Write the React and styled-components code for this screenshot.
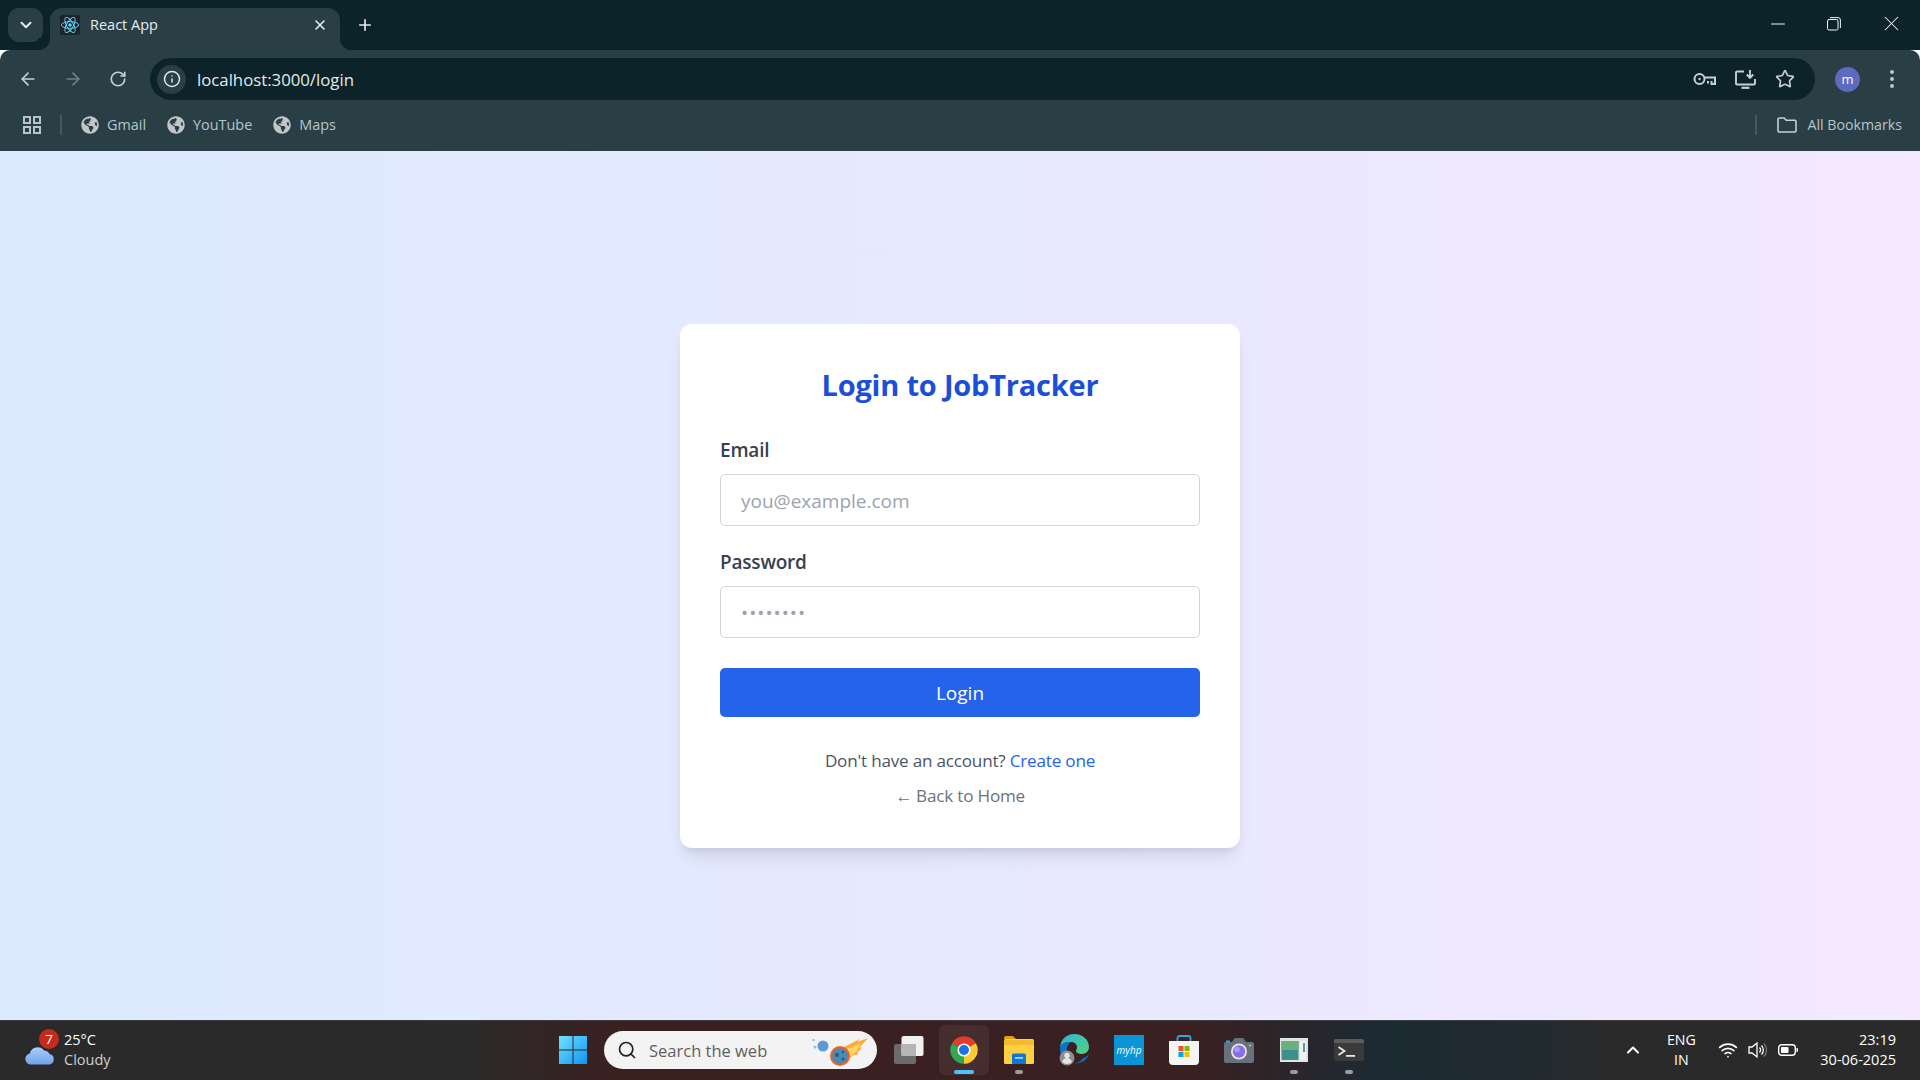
import React from "react";
import styled, { createGlobalStyle } from "styled-components";
import { ArrowLeft, ArrowRight, RotateCw, Info, X, Plus, ChevronDown, ChevronUp, Star, Search, Wifi, Minus } from "lucide-react";
import { FaGlobeAmericas } from "react-icons/fa";

const GlobalStyle = createGlobalStyle`
  html, body { margin: 0; padding: 0; height: 100%; overflow: hidden; }
  * { box-sizing: border-box; }
  body { font-family: "Open Sans", "Noto Sans", "Liberation Sans", sans-serif; }
`;

const chrome = "#2a3e46";
const frame = "#0b2329";

const Screen = styled.div`
  display: flex;
  flex-direction: column;
  width: 1920px;
  height: 1080px;
`;

/* browser chrome */
const TabStrip = styled.div`
  display: flex;
  align-items: flex-end;
  height: 50px;
  flex-shrink: 0;
  padding-left: 8px;
  background: ${frame};
`;

const TabMenu = styled.div`
  display: flex;
  align-items: center;
  justify-content: center;
  width: 35px;
  height: 34px;
  margin-bottom: 8px;
  border-radius: 11px;
  background: ${chrome};
  color: #e8eef0;
`;

const Tab = styled.div`
  position: relative;
  display: flex;
  align-items: center;
  width: 290px;
  height: 42px;
  margin-left: 7px;
  padding: 0 12px 9px 10px;
  border-radius: 12px 12px 0 0;
  background: ${chrome};
  &::before,
  &::after {
    content: "";
    position: absolute;
    bottom: 0;
    width: 12px;
    height: 12px;
  }
  &::before {
    left: -12px;
    background: radial-gradient(circle at 0 0, ${frame} 12px, ${chrome} 12.5px);
  }
  &::after {
    right: -12px;
    background: radial-gradient(circle at 100% 0, ${frame} 12px, ${chrome} 12.5px);
  }
`;

const TabTitle = styled.span`
  flex: 1;
  margin-left: 10px;
  font-size: 14.5px;
  color: #e6ecee;
`;

const NewTab = styled.div`
  display: flex;
  margin: 0 0 16px 16px;
  color: #e6ecee;
`;

const WindowControls = styled.div`
  display: flex;
  align-items: center;
  gap: 38px;
  margin: 0 16px 14px auto;
  color: #f2f5f6;
`;

const Toolbar = styled.div`
  display: flex;
  align-items: center;
  height: 58px;
  flex-shrink: 0;
  padding: 0 16px 0 16px;
  border-radius: 10px 10px 0 0;
  background: ${chrome};
`;

const NavButton = styled.div`
  display: flex;
  width: 24px;
  justify-content: center;
  margin-right: 21px;
  color: ${(p) => (p.$disabled ? "#6d8087" : "#c5d0d4")};
`;

const AddressBar = styled.div`
  display: flex;
  align-items: center;
  width: 1665px;
  height: 42px;
  margin-left: -1px;
  padding: 0 20px 0 7px;
  border-radius: 21px;
  background: ${frame};
`;

const SiteInfo = styled.div`
  display: flex;
  align-items: center;
  justify-content: center;
  width: 29px;
  height: 29px;
  border-radius: 50%;
  background: ${chrome};
  color: #dfe6e8;
`;

const Url = styled.span`
  flex: 1;
  margin-left: 11px;
  font-size: 16.75px;
  color: #e4eaec;
`;

const BarIcons = styled.div`
  display: flex;
  align-items: center;
  gap: 19px;
  color: #c7cfd2;
`;

const Avatar = styled.div`
  display: flex;
  align-items: center;
  justify-content: center;
  width: 25px;
  height: 25px;
  margin-left: 20px;
  border-radius: 50%;
  background: #5c6bc0;
  font-size: 13px;
  line-height: 1;
  color: #fff;
`;

const KebabMenu = styled.div`
  display: flex;
  flex-direction: column;
  gap: 3px;
  margin-left: 30px;
  & > i {
    width: 4px;
    height: 4px;
    border-radius: 50%;
    background: #b9c6ca;
  }
`;

const BookmarkBar = styled.div`
  display: flex;
  align-items: center;
  height: 43px;
  flex-shrink: 0;
  padding: 0 18px 10px 23px;
  background: ${chrome};
  font-size: 14.4px;
  color: #b6c6cc;
`;

const Divider = styled.div`
  width: 2px;
  height: 20px;
  margin: ${(p) => p.$margin};
  background: #46585f;
`;

const Bookmark = styled.div`
  display: flex;
  align-items: center;
  gap: 8px;
  margin-right: 21px;
  color: #b6c6cc;
  & > svg { color: #c2c6c8; }
`;

const BookmarkEnd = styled.div`
  display: flex;
  align-items: center;
  margin-left: auto;
`;

const AllBookmarks = styled.div`
  display: flex;
  align-items: center;
  gap: 10px;
  font-size: 14.2px;
`;

/* login page */
const Page = styled.main`
  flex: 1;
  display: flex;
  align-items: center;
  justify-content: center;
  background: linear-gradient(to right, #dbeafe, #f3e8ff);
`;

const Card = styled.form`
  display: flex;
  flex-direction: column;
  width: 560px;
  height: 524px;
  margin-top: 1px;
  padding: 40px;
  border-radius: 12px;
  background: #fff;
  box-shadow: 0 12px 18px -4px rgba(0, 0, 0, 0.1), 0 5px 8px -5px rgba(0, 0, 0, 0.1);
`;

const Title = styled.h2`
  margin: 0 0 31px;
  height: 41px;
  font-size: 29px;
  line-height: 41px;
  font-weight: 700;
  letter-spacing: -0.2px;
  text-align: center;
  color: #1d4ed8;
`;

const Label = styled.label`
  display: block;
  height: 28px;
  margin-bottom: 10px;
  font-size: 19px;
  line-height: 28px;
  font-weight: 600;
  letter-spacing: -0.2px;
  color: #374151;
`;

const Field = styled.div`
  margin-bottom: 22px;
`;

const Input = styled.input`
  display: block;
  width: 100%;
  height: 52px;
  padding: 1px 20px 0;
  border: 1px solid #d1d5db;
  border-radius: 5px;
  outline: none;
  background: #fff;
  font-family: inherit;
  font-size: 19px;
  &::placeholder { color: #9ca3af; opacity: 1; }
  &[type="password"]::placeholder { letter-spacing: 1px; }
`;

const SubmitButton = styled.button`
  width: 100%;
  height: 50px;
  margin-top: 8px;
  border: 0;
  border-radius: 5px;
  background: #2563eb;
  font-family: inherit;
  font-size: 19px;
  color: #fff;
`;

const HelpText = styled.p`
  margin: ${(p) => p.$margin};
  font-size: 17.1px;
  line-height: 24px;
  letter-spacing: -0.2px;
  text-align: center;
  color: ${(p) => p.$color};
`;

const Link = styled.a`
  color: #2563eb;
`;

/* taskbar */
const Taskbar = styled.footer`
  display: grid;
  grid-template-columns: 558px 1fr 300px;
  align-items: center;
  height: 60px;
  flex-shrink: 0;
  border-top: 1px solid #3e3e3e;
  background: linear-gradient(to right, #2a2a2a 0, #2a2a2a 24%, #3a2120 32%, #3a2021 62%, #1c2a33 72%, #222b30 80%, #2a2a2a 84%);
  color: #fff;
`;

const Weather = styled.div`
  display: flex;
  align-items: center;
  padding-left: 25px;
`;

const WeatherIcon = styled.div`
  position: relative;
  display: flex;
  width: 30px;
  margin-top: 8px;
`;

const Badge = styled.span`
  position: absolute;
  top: -16px;
  right: -4px;
  width: 20px;
  height: 20px;
  border-radius: 50%;
  background: #c42b1c;
  font-size: 13.5px;
  line-height: 20px;
  text-align: center;
  color: #fff;
`;

const WeatherText = styled.div`
  margin: -1px 0 0 9px;
  font-size: 14.5px;
  line-height: 20px;
  color: #fff;
  & > div + div { color: #cfcfcf; }
`;

const TaskIcons = styled.div`
  display: flex;
  align-items: center;
  margin-top: -1px;
`;

const TaskButton = styled.div`
  position: relative;
  display: flex;
  align-items: center;
  justify-content: center;
  width: 50px;
  height: 50px;
  margin-right: 5px;
  border-radius: 6px;
  background: ${(p) => (p.$active ? "rgba(255,255,255,0.06)" : "transparent")};
  &::after {
    content: "";
    display: ${(p) => (p.$dot ? "block" : "none")};
    position: absolute;
    bottom: 1px;
    left: 50%;
    width: ${(p) => (p.$active ? "20px" : "8px")};
    height: 4px;
    margin-left: ${(p) => (p.$active ? "-10px" : "-4px")};
    border-radius: 2px;
    background: ${(p) => (p.$active ? "#4cc2ff" : "#9a9a9a")};
  }
`;

const SearchBox = styled.div`
  display: flex;
  align-items: center;
  width: 273px;
  height: 38px;
  margin: 0 7px 0 16px;
  padding: 0 8px 0 13px;
  border-radius: 19px;
  background: #f3f3f3;
  font-size: 16.5px;
  color: #5f5f5f;
  & > span { flex: 1; margin-left: 12px; }
`;

const Tray = styled.div`
  display: flex;
  align-items: center;
  justify-content: flex-end;
  margin-top: -1px;
  padding-right: 24px;
  font-size: 14.2px;
  white-space: nowrap;
`;

const Language = styled.div`
  width: 40px;
  margin: 0 17px 0 18px;
  line-height: 20px;
  text-align: center;
`;

const TrayIcons = styled.div`
  display: flex;
  align-items: center;
  gap: 10px;
`;

const Clock = styled.div`
  margin-left: 22px;
  font-size: 14.5px;
  line-height: 20px;
  text-align: right;
`;

const ReactLogo = () => (
  <svg width="20" height="20" viewBox="0 0 20 20">
    <rect width="20" height="20" rx="2" fill="#20232a" />
    <g fill="none" stroke="#61dafb" strokeWidth="0.9">
      <ellipse cx="10" cy="10" rx="8.6" ry="3.4" />
      <ellipse cx="10" cy="10" rx="8.6" ry="3.4" transform="rotate(60 10 10)" />
      <ellipse cx="10" cy="10" rx="8.6" ry="3.4" transform="rotate(120 10 10)" />
    </g>
    <circle cx="10" cy="10" r="1.7" fill="#61dafb" />
  </svg>
);

const RestoreIcon = () => (
  <svg width="14" height="14" viewBox="0 0 14 14" fill="none" stroke="currentColor" strokeWidth="1">
    <rect x="0.5" y="2.5" width="10.5" height="10.5" rx="1.5" />
    <path d="M3 .6h8a2.4 2.4 0 0 1 2.4 2.4v8" />
  </svg>
);

const KeyIcon = () => (
  <svg width="23" height="14" viewBox="0 0 23 14" fill="none" stroke="currentColor" strokeWidth="2">
    <circle cx="6.5" cy="7" r="5" />
    <circle cx="6.5" cy="7" r="1.2" fill="currentColor" stroke="none" />
    <path d="M11.5 5.5H22V12h-3.5V9M15 9v2.5" />
  </svg>
);

const InstallIcon = () => (
  <svg width="21" height="19" viewBox="0 0 21 19" fill="none" stroke="currentColor" strokeWidth="1.9">
    <path d="M9 1.5H2a1 1 0 0 0-1 1v11a1 1 0 0 0 1 1h17a1 1 0 0 0 1-1V9" />
    <path d="M15 0v7M11.8 4.5 15 7.8l3.2-3.3" />
    <path d="M6.5 17.8h8" strokeWidth="2.2" />
  </svg>
);

const GridIcon = () => (
  <svg width="18" height="18" viewBox="0 0 18 18" fill="none" stroke="#b9c4c8" strokeWidth="2">
    <rect x="1" y="1" width="6" height="6" />
    <rect x="11" y="1" width="6" height="6" />
    <rect x="1" y="11" width="6" height="6" />
    <rect x="11" y="11" width="6" height="6" />
  </svg>
);

const FolderIcon = () => (
  <svg width="20" height="16" viewBox="0 0 20 16" fill="none" stroke="#c8d0d3" strokeWidth="1.6">
    <path d="M1 2.2A1.2 1.2 0 0 1 2.2 1h5l2 2.2h8.6A1.2 1.2 0 0 1 19 4.4v9.4a1.2 1.2 0 0 1-1.2 1.2H2.2A1.2 1.2 0 0 1 1 13.8z" />
  </svg>
);

const CloudIcon = () => (
  <svg width="30" height="20" viewBox="0 0 30 20">
    <defs>
      <linearGradient id="cloudFill" x1="0" y1="0" x2="0" y2="1">
        <stop offset="0" stopColor="#a9cdf7" />
        <stop offset="1" stopColor="#6fa3ee" />
      </linearGradient>
    </defs>
    <path d="M6 19.5a5.5 5.5 0 0 1-1.2-10.9A8 8 0 0 1 19 5.5a6 6 0 0 1 5.5 3.6A5.3 5.3 0 0 1 24.5 19.5z" fill="url(#cloudFill)" />
  </svg>
);

const WindowsLogo = () => (
  <svg width="30" height="30" viewBox="0 0 30 30">
    <defs>
      <linearGradient id="winFill" x1="0" y1="0" x2="1" y2="1">
        <stop offset="0" stopColor="#6fe3ff" />
        <stop offset="1" stopColor="#0f93f5" />
      </linearGradient>
    </defs>
    <path d="M1 1h13.5v13.5H1zM15.5 1H29v13.5H15.5zM1 15.5h13.5V29H1zM15.5 15.5H29V29H15.5z" fill="url(#winFill)" />
  </svg>
);

const CometIcon = () => (
  <svg width="58" height="32" viewBox="0 0 58 32">
    <circle cx="12" cy="12" r="5.5" fill="#5b9bd1" />
    <circle cx="2.5" cy="6" r="1.2" fill="#8fc2e8" />
    <circle cx="4" cy="13" r="1.5" fill="#8fc2e8" />
    <path d="M57 4 46 8l3-3-16 8 2 14 8-6 5-1-2-1 5-6-3 1z" fill="#ffa92e" />
    <path d="M50 9 36 15l3 8 6-5z" fill="#ffd466" />
    <circle cx="29" cy="22" r="10" fill="#e8622c" />
    <circle cx="29" cy="22" r="7.8" fill="#4a8bb5" />
    <circle cx="26" cy="21" r="2" fill="#2d5a80" />
    <circle cx="32" cy="25" r="1.5" fill="#2d5a80" />
    <circle cx="32" cy="18" r="1.2" fill="#2d5a80" />
  </svg>
);

const TaskViewIcon = () => (
  <svg width="30" height="28" viewBox="0 0 30 28">
    <rect x="0" y="8" width="22" height="20" rx="2" fill="#6b6b6b" />
    <rect x="7.5" y="0" width="22" height="20" rx="2" fill="#f1f1f1" />
    <rect x="7.5" y="8" width="14.5" height="12" fill="#b5b5b5" />
  </svg>
);

const ChromeIcon = () => (
  <svg width="30" height="30" viewBox="0 0 48 48">
    <path d="M24 24 4.95 13A22 22 0 0 1 43.05 13z" fill="#e33b2e" />
    <path d="M24 24 43.05 13A22 22 0 0 1 24 46z" fill="#fcc934" />
    <path d="M24 24V46A22 22 0 0 1 4.95 13z" fill="#2fa84f" />
    <circle cx="24" cy="24" r="10.5" fill="#fff" />
    <circle cx="24" cy="24" r="8" fill="#1a73e8" />
  </svg>
);

const ExplorerIcon = () => (
  <svg width="30" height="28" viewBox="0 0 30 28">
    <path d="M0 2a2 2 0 0 1 2-2h7l3 3h-12z" fill="#d9a118" />
    <rect x="0" y="3" width="30" height="25" rx="1.5" fill="#ffd044" />
    <rect x="0" y="4" width="30" height="5" fill="#f4b92c" />
    <path d="M8 19a1.5 1.5 0 0 1 1.5-1.5h11A1.5 1.5 0 0 1 22 19v9H8z" fill="#0f78d4" />
    <rect x="11" y="21" width="8" height="1.8" fill="#9fd3ff" />
  </svg>
);

const EdgeIcon = () => (
  <svg width="31" height="32" viewBox="0 0 31 32">
    <defs>
      <linearGradient id="edgeFill" x1="0" y1="0" x2="1" y2="1">
        <stop offset="0" stopColor="#2fb5d9" />
        <stop offset="1" stopColor="#52d17c" />
      </linearGradient>
    </defs>
    <path d="M1 13C2 5 8 0 15 0c9 0 15 6 15 13 0 4-3 7-7 7-3 0-6-1-6-3 0-1 1-2 1-4 0-3-3-5-6-5C7 8 3 9 1 13z" fill="url(#edgeFill)" />
    <path d="M1 13c2-4 6-5 11-5-3 2-5 6-4 12 0 3 2 7 5 9C6 28 0 21 1 13z" fill="#1173c7" />
    <path d="M30 20c-2 7-9 10-15 9 4 0 7-2 9-5 2 0 4-2 6-4z" fill="#0e6bb5" />
    <circle cx="8" cy="24" r="7.5" fill="#8e8e8e" />
    <circle cx="8" cy="21.5" r="2.7" fill="#e5e5e5" />
    <path d="M3 28c1-3 3-4 5-4s4 1 5 4a7 7 0 0 1-10 0z" fill="#e5e5e5" />
  </svg>
);

const HpTile = styled.div`
  display: flex;
  align-items: center;
  justify-content: center;
  width: 30px;
  height: 30px;
  background: #0a96d6;
  font-size: 10px;
  font-style: italic;
  color: #fff;
`;

const StoreIcon = () => (
  <svg width="30" height="30" viewBox="0 0 30 30">
    <path d="M8.5 6V3a2 2 0 0 1 2-2h9a2 2 0 0 1 2 2v3" fill="none" stroke="#2aa5e8" strokeWidth="1.8" />
    <path d="M0 6h30v20a4 4 0 0 1-4 4H4a4 4 0 0 1-4-4z" fill="#f5f5f5" />
    <rect x="9.5" y="11" width="5" height="5" fill="#f25022" />
    <rect x="15.5" y="11" width="5" height="5" fill="#7fba00" />
    <rect x="9.5" y="17" width="5" height="5" fill="#00a4ef" />
    <rect x="15.5" y="17" width="5" height="5" fill="#ffb900" />
  </svg>
);

const CameraIcon = () => (
  <svg width="30" height="25" viewBox="0 0 30 25">
    <path d="M0 6a2 2 0 0 1 2-2h6l2-3a2 2 0 0 1 1.5-1h7A2 2 0 0 1 20 1l2 3h6a2 2 0 0 1 2 2v17a2 2 0 0 1-2 2H2a2 2 0 0 1-2-2z" fill="#67727a" />
    <rect x="2" y="2.5" width="4" height="2" fill="#2da5e8" />
    <circle cx="15" cy="13.5" r="8" fill="#e8e8e8" />
    <circle cx="15" cy="13.5" r="6.2" fill="#8b6ee8" />
    <circle cx="13" cy="11.5" r="2.8" fill="#a7a0f5" />
    <circle cx="26" cy="7.5" r="1" fill="#c9c9c9" />
  </svg>
);

const SnipIcon = () => (
  <svg width="28" height="24" viewBox="0 0 28 24">
    <rect width="28" height="24" fill="#dfe5e3" />
    <rect x="1.5" y="3" width="17" height="19" fill="#3f8f8a" />
    <rect x="1.5" y="3" width="17" height="9" fill="#6ab07d" />
    <rect x="20" y="3" width="6" height="19" fill="#eef2f1" />
    <rect x="23" y="5" width="2" height="9" fill="#5e9aa1" />
  </svg>
);

const TerminalIcon = () => (
  <svg width="30" height="22" viewBox="0 0 30 22">
    <rect width="30" height="22" rx="2" fill="#3a3a3a" />
    <path d="M0 2a2 2 0 0 1 2-2h26a2 2 0 0 1 2 2v2H0z" fill="#5c5c5c" />
    <path d="M4.5 8l6 4-6 4" fill="none" stroke="#e8e8e8" strokeWidth="1.8" />
    <rect x="12" y="16" width="9" height="1.8" fill="#e8e8e8" />
  </svg>
);

const SpeakerIcon = () => (
  <svg width="20" height="18" viewBox="0 0 20 18" fill="none" stroke="#fff" strokeWidth="1.3">
    <path d="M1 6h3l5-4v14l-5-4H1z" />
    <path d="M11.5 6.5a3.5 3.5 0 0 1 0 5M13.5 4.5a6.5 6.5 0 0 1 0 9" />
    <path d="M16 2.5a9.5 9.5 0 0 1 0 13" stroke="#777" />
  </svg>
);

const BatteryIcon = () => (
  <svg width="20" height="12" viewBox="0 0 20 12">
    <rect x="0.7" y="0.7" width="16.6" height="10.6" rx="3" fill="none" stroke="#fff" strokeWidth="1.4" />
    <rect x="3" y="3" width="7.5" height="6" rx="1" fill="#fff" />
    <path d="M18.5 4h.5a1 1 0 0 1 1 1v2a1 1 0 0 1-1 1h-.5z" fill="#fff" />
  </svg>
);

const bookmarks = ["Gmail", "YouTube", "Maps"];

export default function App() {
  return (
    <Screen>
      <GlobalStyle />
      <TabStrip>
        <TabMenu>
          <ChevronDown size={18} strokeWidth={2.6} />
        </TabMenu>
        <Tab>
          <ReactLogo />
          <TabTitle>React App</TabTitle>
          <X size={16} strokeWidth={2.4} color="#e6ecee" />
        </Tab>
        <NewTab>
          <Plus size={18} strokeWidth={2.2} />
        </NewTab>
        <WindowControls>
          <Minus size={22} strokeWidth={1.1} />
          <RestoreIcon />
          <X size={25} strokeWidth={1} />
        </WindowControls>
      </TabStrip>

      <Toolbar>
        <NavButton>
          <ArrowLeft size={20} strokeWidth={2} />
        </NavButton>
        <NavButton $disabled>
          <ArrowRight size={20} strokeWidth={2} />
        </NavButton>
        <NavButton>
          <RotateCw size={18} strokeWidth={2.2} />
        </NavButton>
        <AddressBar>
          <SiteInfo>
            <Info size={18} strokeWidth={2} />
          </SiteInfo>
          <Url>localhost:3000/login</Url>
          <BarIcons>
            <KeyIcon />
            <InstallIcon />
            <Star size={20} strokeWidth={2} />
          </BarIcons>
        </AddressBar>
        <Avatar>m</Avatar>
        <KebabMenu>
          <i />
          <i />
          <i />
        </KebabMenu>
      </Toolbar>

      <BookmarkBar>
        <GridIcon />
        <Divider $margin="0 19px 0 19px" />
        {bookmarks.map((name) => (
          <Bookmark key={name}>
            <FaGlobeAmericas size={18} />
            {name}
          </Bookmark>
        ))}
        <BookmarkEnd>
          <Divider $margin="0 20px 0 0" />
          <AllBookmarks>
            <FolderIcon />
            All Bookmarks
          </AllBookmarks>
        </BookmarkEnd>
      </BookmarkBar>

      <Page>
        <Card onSubmit={(e) => e.preventDefault()}>
          <Title>Login to JobTracker</Title>
          <Field>
            <Label>Email</Label>
            <Input type="email" placeholder="you@example.com" />
          </Field>
          <Field>
            <Label>Password</Label>
            <Input type="password" placeholder="••••••••" />
          </Field>
          <SubmitButton type="submit">Login</SubmitButton>
          <HelpText $margin="32px 0 0" $color="#4b5563">
            Don't have an account? <Link>Create one</Link>
          </HelpText>
          <HelpText $margin="11px 0 0" $color="#6b7280">
            ← Back to Home
          </HelpText>
        </Card>
      </Page>

      <Taskbar>
        <Weather>
          <WeatherIcon>
            <CloudIcon />
            <Badge>7</Badge>
          </WeatherIcon>
          <WeatherText>
            <div>25°C</div>
            <div>Cloudy</div>
          </WeatherText>
        </Weather>
        <TaskIcons>
          <WindowsLogo />
          <SearchBox>
            <Search size={20} strokeWidth={2} color="#222" />
            <span>Search the web</span>
            <CometIcon />
          </SearchBox>
          <TaskButton>
            <TaskViewIcon />
          </TaskButton>
          <TaskButton $active $dot>
            <ChromeIcon />
          </TaskButton>
          <TaskButton $dot>
            <ExplorerIcon />
          </TaskButton>
          <TaskButton>
            <EdgeIcon />
          </TaskButton>
          <TaskButton>
            <HpTile>myhp</HpTile>
          </TaskButton>
          <TaskButton>
            <StoreIcon />
          </TaskButton>
          <TaskButton>
            <CameraIcon />
          </TaskButton>
          <TaskButton $dot>
            <SnipIcon />
          </TaskButton>
          <TaskButton $dot>
            <TerminalIcon />
          </TaskButton>
        </TaskIcons>
        <Tray>
          <ChevronUp size={20} strokeWidth={2.4} />
          <Language>
            ENG
            <br />
            IN
          </Language>
          <TrayIcons>
            <Wifi size={20} strokeWidth={2} />
            <SpeakerIcon />
            <BatteryIcon />
          </TrayIcons>
          <Clock>
            23:19
            <br />
            30-06-2025
          </Clock>
        </Tray>
      </Taskbar>
    </Screen>
  );
}
